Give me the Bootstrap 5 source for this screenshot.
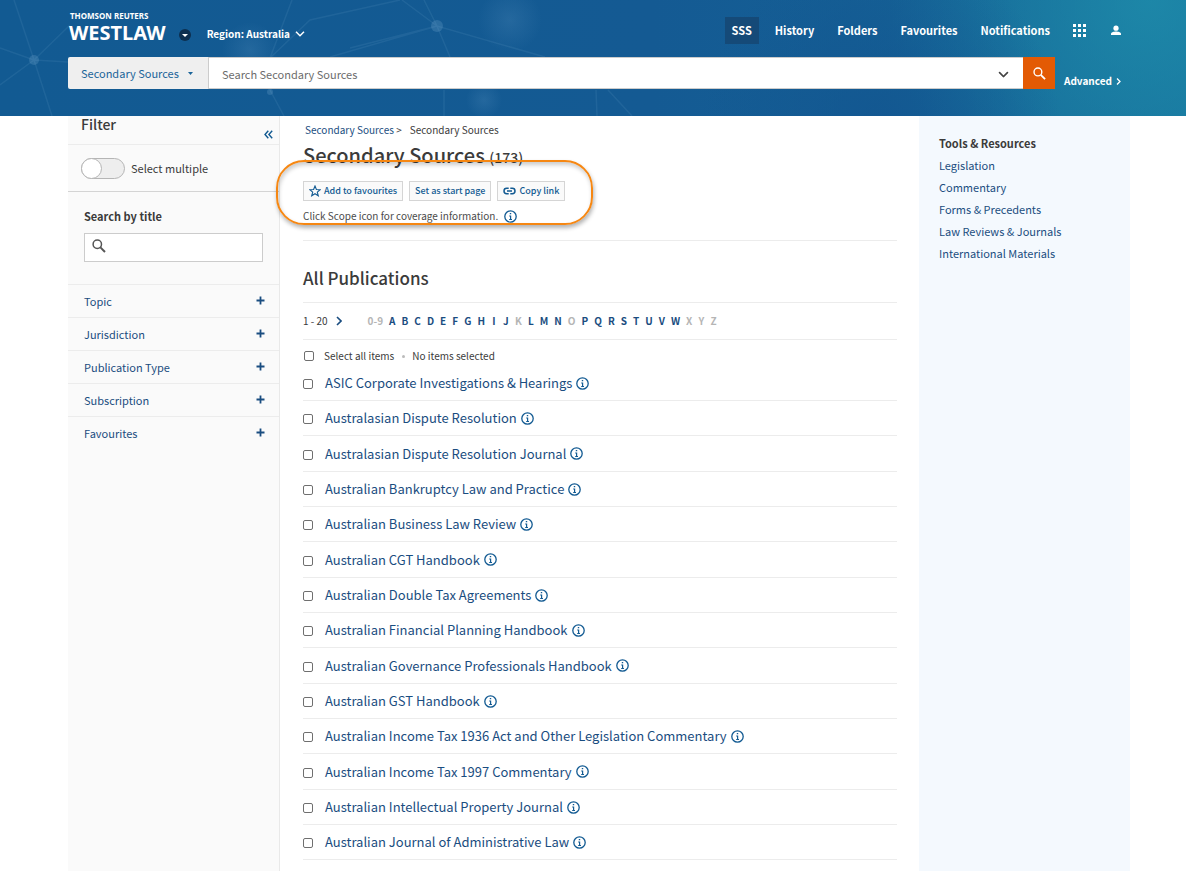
<!DOCTYPE html>
<html lang="en-AU">
<head>
<meta charset="utf-8">
<meta name="viewport" content="width=device-width, initial-scale=1">
<title>Secondary Sources - Westlaw</title>
<link href="https://cdn.jsdelivr.net/npm/bootstrap@5.3.0/dist/css/bootstrap.min.css" rel="stylesheet">
<style>
  :root { --wl-blue: #125a92; --wl-link: #1a4d80; --wl-text: #3b3b3b; --wl-line: #ececec; }
  body { font-family: "Noto Sans CJK SC", "Open Sans", sans-serif; font-size: 11px; line-height: 20px; color: var(--wl-text); }
  a { color: var(--wl-link); text-decoration: none; }
  a:hover { text-decoration: underline; }
  svg { flex: none; display: block; }
  .gutter { padding-left: 68px; padding-right: 56px; }

  /* Header */
  .masthead { background: linear-gradient(90deg, #125a92 0%, #145a93 55%, #155f95 72%, #166a99 90%, #17709c 100%); padding-bottom: 27px; isolation: isolate; }
  .masthead-art { inset: 0; width: 100%; height: 100%; z-index: -1; }
  .masthead a, .masthead .region-btn { color: #fff; }
  .masthead-top { height: 57px; }
  .brand { font-family: "Noto Sans", sans-serif; font-weight: 700; padding-top: 10px; }
  .brand-owner { font-size: 8px; line-height: 12px; padding-left: 2px; }
  .brand-name { font-size: 20px; line-height: 22px; padding-left: 1px; }
  .brand-menu { width: 12px; height: 12px; background: #0d2f4f; border: 0; margin: 29px 0 0 13px; }
  .region-btn { font-size: 10px; font-weight: 700; background: none; border: 0; margin: 24px 0 0 16px; gap: 5px; }
  .top-nav { gap: 9px; padding-top: 17px; font-weight: 700; }
  .top-nav .nav-link { padding: 3px 7px; line-height: 21px; }
  .top-nav .active { background: #154a78; }
  .top-nav .icon-btn { background: none; border: 0; color: #fff; height: 27px; padding: 0 8px 0 7px; }
  .scope-btn { width: 140px; background: #efefef; border: 0; border-radius: 2px 0 0 2px; color: #1a6499; padding: 0 15px 0 13px; }
  .search-bar { height: 32px; }
  .search-box { background: #fff; border: 1px solid #ccc; border-width: 1px 0 1px 1px; }
  .search-box input { border: 0; outline: 0; padding: 2px 13px 0; background: none; color: var(--wl-text); }
  .search-box input::placeholder { color: #6c6c6c; opacity: 1; }
  .search-box button { border: 0; background: none; padding: 2px 14px 0; }
  .go-btn { width: 32px; background: #e35a04; border: 0; color: #fff; }
  .advanced { width: 75px; padding: 16px 0 0 9px; font-size: 10px; font-weight: 700; line-height: 16px; gap: 4px; }

  /* Filter column */
  .filters { width: 212px; background: #fafafa; border-right: 1px solid #e9e9e9; }
  .filters-head { height: 29px; padding: 0 6px 0 13px; border-bottom: 1px solid var(--wl-line); }
  .filters-head h2 { font-size: 14px; font-weight: 500; line-height: 16px; }
  .filters-head button { border: 0; background: none; padding: 14px 0 0; color: var(--wl-blue); }
  .multi { height: 47px; padding-left: 13px; gap: 6px; border-bottom: 1px solid #d4d4d4; }
  .switch { appearance: none; width: 44px; height: 21px; border: 1px solid #b5b5b5; border-radius: 11px; background: #eee; margin: 0; }
  .switch::before { content: ""; display: block; width: 21px; height: 21px; margin: -1px; border: 1px solid #b5b5b5; border-radius: 50%; background: #fff; }
  .switch:checked::before { margin-left: 22px; }
  .title-search { padding: 14px 16px 22px; }
  .title-search label { font-weight: 700; margin-bottom: 7px; }
  .title-box { height: 29px; border: 1px solid #ccc; background: #fff; padding: 0 0 3px 7px; color: #555; }
  .title-box input { border: 0; outline: 0; background: none; min-width: 0; }
  .facet { border: 0; border-top: 1px solid var(--wl-line); background: none; height: 33px; padding: 0 14px 1px 16px; color: var(--wl-link); text-align: left; }

  /* Content column */
  .content { padding: 3px 22px 10px 23px; min-width: 0; }
  .crumbs { font-size: 10px; gap: 8px; padding: 1px 0 1px 2px; }
  .content h1 { font-size: 20px; font-weight: 500; line-height: 28px; margin: 0 0 10px; }
  .content h1 small { font-size: 14px; font-weight: 500; }
  .callout-box { left: -27px; top: -21px; width: 317px; height: 65px; border: 2px solid #f68712; border-radius: 28px; box-shadow: 1px 3px 4px rgba(0,0,0,.3), inset 1px 3px 4px rgba(0,0,0,.2); pointer-events: none; }
  .actions { gap: 6px; }
  .actions button { height: 20px; border: 1px solid #d5d5d5; background: #fafafa; color: var(--wl-blue); font-size: 9px; font-weight: 500; line-height: 18px; padding: 0 5px; gap: 3px; }
  .hint { font-size: 10px; gap: 6px; padding: 5px 0 14px; color: #4a4a4a; }
  .rule-below { border-bottom: 1px solid var(--wl-line); }
  .content h2 { font-size: 17px; font-weight: 500; line-height: 28px; margin: 0; padding: 23px 0 10px; }
  .pager { font-size: 10px; line-height: 36px; gap: 26px; }
  .letters { gap: 6px; font-weight: 700; color: #b5b5b5; }
  .letters > * { min-width: 6px; text-align: center; }
  .select-all { font-size: 10px; gap: 10px; padding: 6px 0 0 1px; }
  .tick { appearance: none; flex: none; width: 10px; height: 10px; border: 1px solid #6f6f6f; border-radius: 2px; background: #fff; margin: 0; }
  .tick:checked { background: var(--wl-blue); }
  .dot { width: 3px; height: 3px; border-radius: 50%; background: #bbb; }
  .select-note { gap: 7px; margin-left: -2px; }
  .pubs li { min-height: 35px; gap: 12px; font-size: 13px; border-bottom: 1px solid var(--wl-line); }
  .pubs li:nth-child(3n) { min-height: 36px; }
  .pubs .tick { margin-top: 2px; }
  .pubs .info, .hint .info { border: 0; padding: 0; background: none; color: var(--wl-blue); }

  /* Tools column */
  .tools { width: 211px; background: #f4f9fe; padding: 16px 20px; }
  .tools h2 { font-size: 11px; font-weight: 700; line-height: 22px; margin: 0; }
  .tools li { line-height: 22px; }
</style>
</head>
<body>
<svg width="0" height="0" class="position-absolute" aria-hidden="true">
  <symbol id="i-info" viewBox="0 0 13 13"><circle cx="6.5" cy="6.5" r="5.7" fill="none" stroke="currentColor" stroke-width="1.300"/><path d="M5.800 3H7.200V4.300H5.800zM5.200 5.500H7.200V9H8V10H5.200V9H6V6.400H5.200z" fill="currentColor"/></symbol>
  <symbol id="i-search" viewBox="0 0 14 14"><circle cx="5.300" cy="5.300" r="4.200" fill="none" stroke="currentColor" stroke-width="1.500"/><path d="M8.400 8.400L13 13" stroke="currentColor" stroke-width="2"/></symbol>
  <symbol id="i-plus" viewBox="0 0 9 9"><path d="M4.500.5V8.500M.5 4.500H8.500" stroke="currentColor" stroke-width="1.800"/></symbol>
  <symbol id="i-down" viewBox="0 0 10 6"><path d="M1 .8L5 4.800L9 .8" fill="none" stroke="currentColor" stroke-width="1.500"/></symbol>
</svg>

<div class="d-flex flex-column min-vh-100">
<header class="masthead gutter position-relative">
  <svg class="masthead-art position-absolute" viewBox="0 0 1186 116" preserveAspectRatio="none" aria-hidden="true">
    <defs>
      <radialGradient id="teal" cx="1150" cy="0" r="260" gradientUnits="userSpaceOnUse"><stop offset="0" stop-color="#1f8fac" stop-opacity=".75"/><stop offset="1" stop-color="#1f8fac" stop-opacity="0"/></radialGradient>
      <radialGradient id="deep" cx="880" cy="125" r="180" gradientUnits="userSpaceOnUse"><stop offset="0" stop-color="#125590" stop-opacity=".8"/><stop offset="1" stop-color="#125590" stop-opacity="0"/></radialGradient>
      <radialGradient id="glow"><stop offset="0" stop-color="#7db0d8" stop-opacity=".16"/><stop offset="1" stop-color="#7db0d8" stop-opacity="0"/></radialGradient>
    </defs>
    <rect width="1186" height="116" fill="url(#teal)"/>
    <rect width="1186" height="116" fill="url(#deep)"/>
    <g stroke="#8fc0e0" stroke-opacity=".1" stroke-width="1.500" fill="none">
      <path d="M34 60L14 0M34 60L0 85M34 60L52 116M34 60L0 48M34 60L68 62M34 60L70 25M270 58L292 0M270 58L310 20L400 0M270 90L284 116M330 57L437 26L545 57M437 26L402 0M437 26L424 0M437 26L350 48M437 26L450 57M596 90L597 116M608 90L632 116M444 90V116"/>
    </g>
    <g fill="#8fc0e0" fill-opacity=".2"><circle cx="34" cy="60" r="5"/><circle cx="437" cy="26" r="6"/><circle cx="270" cy="92" r="3"/></g>
    <g fill="url(#glow)"><circle cx="510" cy="20" r="32"/><circle cx="484" cy="100" r="18"/><circle cx="250" cy="50" r="28"/></g>
  </svg>
  <div class="masthead-top d-flex align-items-start">
    <a href="#" class="brand text-decoration-none">
      <div class="brand-owner">THOMSON REUTERS</div>
      <div class="brand-name">WESTLAW</div>
    </a>
    <button class="brand-menu rounded-circle d-flex align-items-center justify-content-center p-0" aria-label="Product menu">
      <svg width="6" height="3" viewBox="0 0 6 3"><path d="M0 0H6L3 3Z" fill="#fff"/></svg>
    </button>
    <button class="region-btn d-flex align-items-center p-0">Region: Australia <svg width="10" height="6"><use href="#i-down"/></svg></button>
    <nav class="top-nav d-flex ms-auto" aria-label="Main">
      <a class="nav-link active" href="#">SSS</a>
      <a class="nav-link" href="#">History</a>
      <a class="nav-link" href="#">Folders</a>
      <a class="nav-link" href="#">Favourites</a>
      <a class="nav-link" href="#">Notifications</a>
      <button class="icon-btn" aria-label="Products"><svg width="13" height="13" viewBox="0 0 13 13" fill="currentColor"><path d="M0 0h3v3H0zM5 0h3v3H5zM10 0h3v3h-3zM0 5h3v3H0zM5 5h3v3H5zM10 5h3v3h-3zM0 10h3v3H0zM5 10h3v3H5zM10 10h3v3h-3z"/></svg></button>
      <button class="icon-btn" aria-label="Account"><svg width="12" height="12" viewBox="0 0 12 12" fill="currentColor"><circle cx="6" cy="3.200" r="2.600"/><path d="M1 10V9C1 7.300 4 6.600 6 6.600s5 .7 5 2.400V10z"/></svg></button>
    </nav>
  </div>
  <form class="d-flex" role="search" onsubmit="return false">
    <div class="search-bar d-flex flex-grow-1">
      <button type="button" class="scope-btn d-flex align-items-center justify-content-between">Secondary Sources <svg width="5" height="3" viewBox="0 0 5 3"><path d="M0 0H5L2.500 3Z" fill="currentColor"/></svg></button>
      <div class="search-box d-flex flex-grow-1">
        <input type="text" class="flex-grow-1" placeholder="Search Secondary Sources" aria-label="Search Secondary Sources">
        <button type="button" aria-label="Recent searches"><svg width="11" height="7" viewBox="0 0 10 6" color="#444"><use href="#i-down"/></svg></button>
      </div>
      <button class="go-btn d-flex align-items-center justify-content-center p-0" aria-label="Search"><svg width="13" height="13" viewBox="0 0 14 14"><use href="#i-search"/></svg></button>
    </div>
    <a href="#" class="advanced d-flex align-items-center">Advanced <svg width="5" height="7" viewBox="0 0 5 7"><path d="M1 .5L4 3.500L1 6.500" fill="none" stroke="currentColor" stroke-width="1.300"/></svg></a>
  </form>
</header>

<div class="gutter d-flex flex-grow-1">
  <aside class="filters flex-shrink-0">
    <div class="filters-head d-flex justify-content-between align-items-start">
      <h2 class="m-0">Filter</h2>
      <button aria-label="Collapse filters"><svg width="9" height="9" viewBox="0 0 9 9"><path d="M4.300.7L1 4.500L4.300 8.300M8.200.7L4.900 4.500L8.200 8.300" fill="none" stroke="currentColor" stroke-width="1.400"/></svg></button>
    </div>
    <div class="multi d-flex align-items-center">
      <input type="checkbox" role="switch" class="switch" id="multi"><label for="multi">Select multiple</label>
    </div>
    <div class="title-search">
      <label for="title" class="d-block">Search by title</label>
      <div class="title-box d-flex align-items-center"><svg width="14" height="14"><use href="#i-search"/></svg><input type="text" id="title" class="flex-grow-1"></div>
    </div>
    <button class="facet w-100 d-flex justify-content-between align-items-center">Topic <svg width="9" height="9"><use href="#i-plus"/></svg></button>
    <button class="facet w-100 d-flex justify-content-between align-items-center">Jurisdiction <svg width="9" height="9"><use href="#i-plus"/></svg></button>
    <button class="facet w-100 d-flex justify-content-between align-items-center">Publication Type <svg width="9" height="9"><use href="#i-plus"/></svg></button>
    <button class="facet w-100 d-flex justify-content-between align-items-center">Subscription <svg width="9" height="9"><use href="#i-plus"/></svg></button>
    <button class="facet w-100 d-flex justify-content-between align-items-center">Favourites <svg width="9" height="9"><use href="#i-plus"/></svg></button>
  </aside>

  <main class="content flex-grow-1">
    <nav class="crumbs d-flex" aria-label="Breadcrumb"><span><a href="#">Secondary Sources</a> &gt;</span><span>Secondary Sources</span></nav>
    <h1>Secondary Sources <small>(173)</small></h1>
    <div class="position-relative">
      <div class="callout-box position-absolute"></div>
      <div class="actions d-flex">
        <button class="d-flex align-items-center"><svg width="12" height="12" viewBox="0 0 12 12"><path d="M6 1L7.400 4.500L11.200 4.700L8.300 7.100L9.300 10.800L6 8.700L2.700 10.800L3.700 7.100L.8 4.700L4.600 4.500Z" fill="none" stroke="currentColor" stroke-width="1.100"/></svg>Add to favourites</button>
        <button class="d-flex align-items-center">Set as start page</button>
        <button class="d-flex align-items-center"><svg width="13" height="8" viewBox="0 0 13 8"><path d="M5.700 1.300H3.700a2.700 2.700 0 0 0 0 5.400H5.700M7.300 1.300H9.300a2.700 2.700 0 0 1 0 5.400H7.300M4 4H9" fill="none" stroke="currentColor" stroke-width="1.500"/></svg>Copy link</button>
      </div>
      <div class="hint d-flex align-items-center">Click Scope icon for coverage information. <button class="info" aria-label="Scope"><svg width="13" height="13"><use href="#i-info"/></svg></button></div>
    </div>
    <div class="rule-below"></div>
    <h2 class="rule-below">All Publications</h2>
    <div class="pager rule-below d-flex">
      <div class="d-flex align-items-center">1 - 20 <a href="#" class="ps-2" aria-label="Next page"><svg width="6" height="10" viewBox="0 0 6 10"><path d="M1 1L5 5L1 9" fill="none" stroke="currentColor" stroke-width="1.600"/></svg></a></div>
      <div class="letters d-flex" id="letters"><span>0-9</span></div>
    </div>
    <div class="select-all d-flex align-items-center">
      <input type="checkbox" class="tick" id="all"><label for="all">Select all items</label>
      <span class="select-note d-flex align-items-center"><span class="dot"></span><span>No items selected</span></span>
    </div>
    <ul class="pubs list-unstyled m-0" id="pubs"></ul>
  </main>

  <aside class="tools flex-shrink-0">
    <h2>Tools &amp; Resources</h2>
    <ul class="list-unstyled m-0">
      <li><a href="#">Legislation</a></li>
      <li><a href="#">Commentary</a></li>
      <li><a href="#">Forms &amp; Precedents</a></li>
      <li><a href="#">Law Reviews &amp; Journals</a></li>
      <li><a href="#">International Materials</a></li>
    </ul>
  </aside>
</div>
</div>

<script src="https://cdn.jsdelivr.net/npm/bootstrap@5.3.0/dist/js/bootstrap.bundle.min.js"></script>
<script>
  // Letters with no publications are shown without a link
  const empty = 'KOXYZ';
  document.getElementById('letters').innerHTML += [...'ABCDEFGHIJKLMNOPQRSTUVWXYZ']
    .map(c => empty.includes(c) ? `<span>${c}</span>` : `<a href="#">${c}</a>`).join('');

  const titles = [
    'ASIC Corporate Investigations &amp; Hearings', 'Australasian Dispute Resolution',
    'Australasian Dispute Resolution Journal', 'Australian Bankruptcy Law and Practice',
    'Australian Business Law Review', 'Australian CGT Handbook', 'Australian Double Tax Agreements',
    'Australian Financial Planning Handbook', 'Australian Governance Professionals Handbook',
    'Australian GST Handbook', 'Australian Income Tax 1936 Act and Other Legislation Commentary',
    'Australian Income Tax 1997 Commentary', 'Australian Intellectual Property Journal',
    'Australian Journal of Administrative Law'
  ];
  document.getElementById('pubs').innerHTML = titles.map((t, i) =>
    `<li class="d-flex align-items-center"><input type="checkbox" class="tick" id="p${i}" aria-label="Select ${t}">` +
    `<span class="d-flex align-items-center gap-1"><a href="#">${t}</a>` +
    `<button class="info" aria-label="Scope"><svg width="13" height="13"><use href="#i-info"/></svg></button></span></li>`).join('');
</script>
</body>
</html>
